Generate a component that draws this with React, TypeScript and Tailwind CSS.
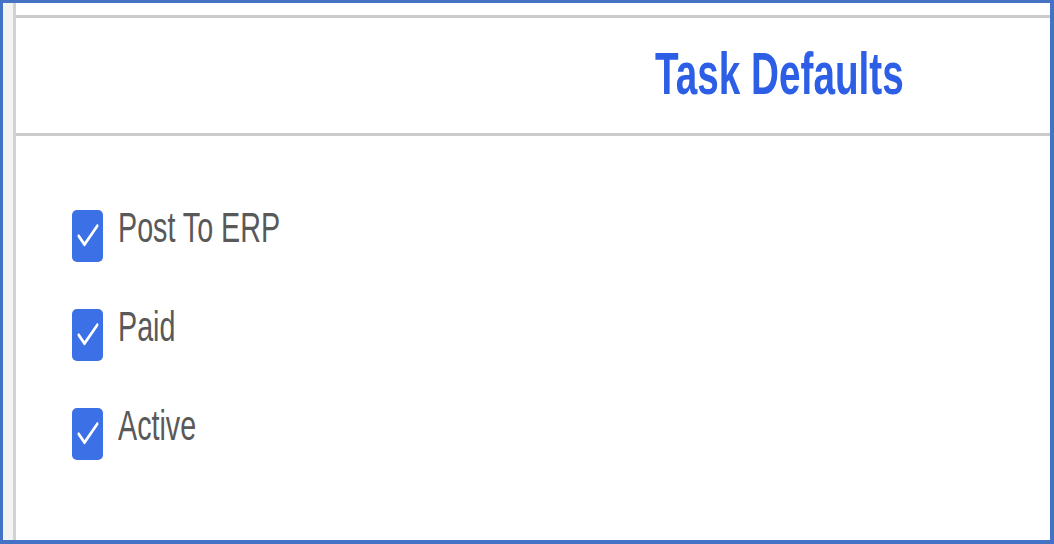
import { Check } from "lucide-react";

const options = ["Post To ERP", "Paid", "Active"];

const TaskDefaults = () => {
  return (
    <div
      className="flex h-[544px] w-[1054px] overflow-hidden border-t-[3px] border-l-[3px] border-r-[4px] border-b-[4px] border-[#4472c4] bg-white"
      style={{ fontFamily: '"Liberation Sans", Arial, sans-serif' }}
    >
      {/* left rail */}
      <div className="w-[13px] shrink-0 border-r-[3px] border-[#d2d2d2] bg-[#f3f3f3]" />

      <div className="flex flex-1 flex-col pt-[12px]">
        {/* header */}
        <div className="flex h-[121px] items-center border-t-[3px] border-b-[3px] border-[#cbcbcb] pl-[639px]">
          <span className="-mt-[3px] inline-block origin-center scale-y-[1.55] text-[38.7px] leading-[38px] font-bold text-[#2d5fe6]">
            Task Defaults
          </span>
        </div>

        {/* checkbox list */}
        <div className="flex flex-col gap-[47px] pt-[74px] pl-[56px]">
          {options.map((label) => (
            <label key={label} className="flex h-[52px] items-center gap-[15px]">
              <span className="flex h-[52px] w-[31px] items-center justify-center rounded-[5px] bg-[#3b70e6]">
                <Check size={28} strokeWidth={2} className="scale-y-[1.45] text-white" />
              </span>
              <span className="-mt-[16px] inline-block origin-center scale-y-[1.47] text-[28.7px] leading-[29px] text-[#595959]">
                {label}
              </span>
            </label>
          ))}
        </div>
      </div>
    </div>
  );
};

export default function App() {
  return <TaskDefaults />;
}
